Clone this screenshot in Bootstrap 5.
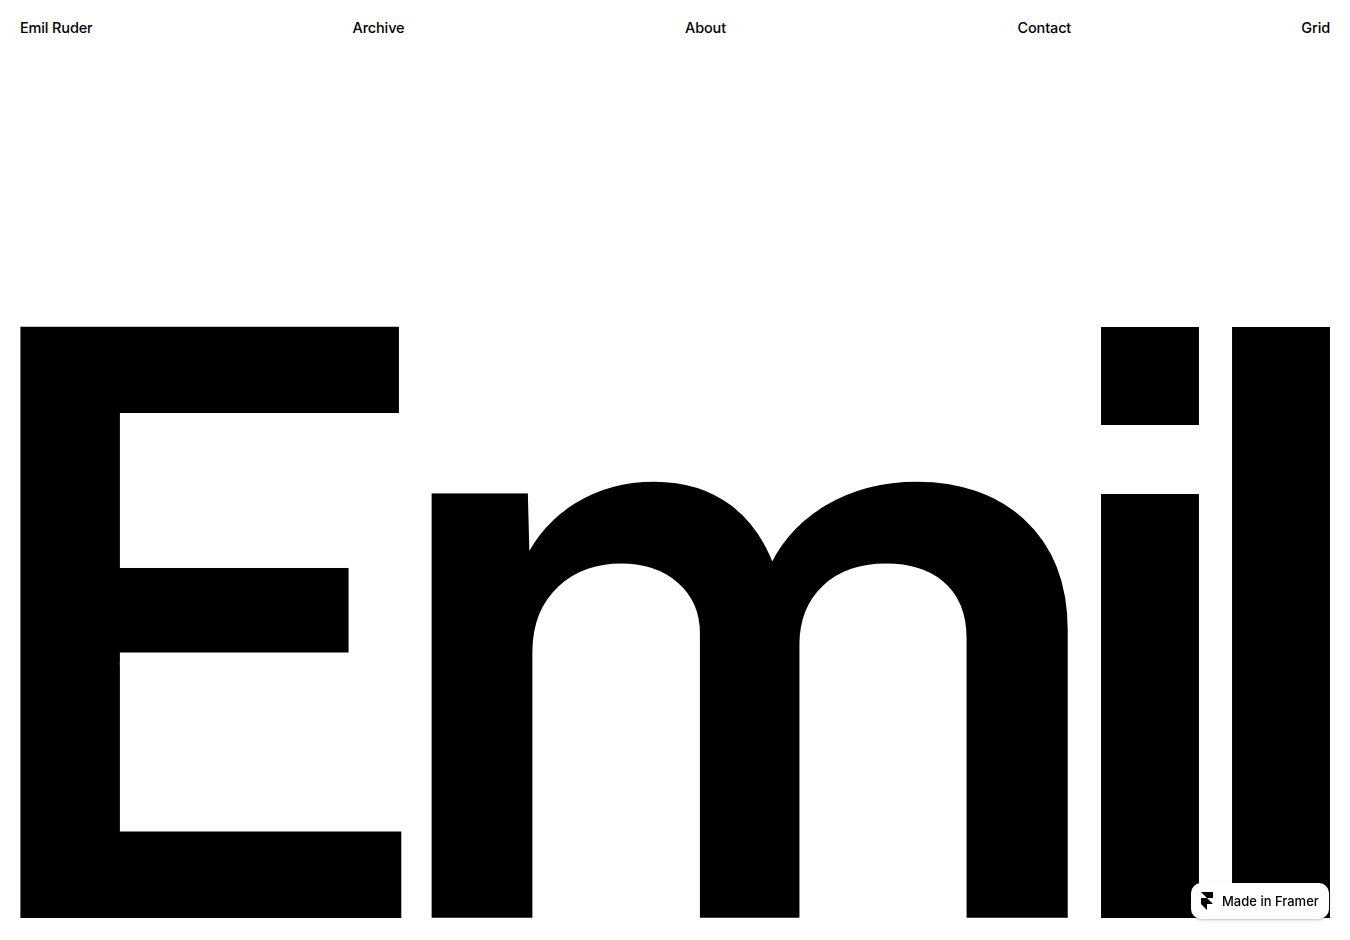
<!DOCTYPE html>
<html lang="en"><head><meta charset="utf-8"><title>Emil Ruder</title>
<link href="https://cdn.jsdelivr.net/npm/bootstrap@5.3.0/dist/css/bootstrap.min.css" rel="stylesheet">
<style>
html,body{height:100%}
body{background:#fff;color:#000;font-family:Inter,"Liberation Sans",sans-serif;overflow:hidden}
.page-wrap{height:940px;padding:20px 20px 22px}
.top-nav{display:grid;grid-template-columns:repeat(4,1fr);gap:20px}
.top-link{font-size:14.5px;font-weight:500;line-height:16px;color:#000;text-decoration:none;letter-spacing:-.01em}
.hero-word{height:591px;gap:33px;font-size:813px;line-height:591px;color:#000}
.hero-letter{display:block;position:relative;height:591px;flex:none;transform-origin:0 100%}
.hero-e,.hero-m{font-weight:500;-webkit-text-stroke:10px #000}
.hero-e{width:380px;transform:translate(-59.5px,-5px) scaleX(.99) scaleY(.983)}
.hero-e::before{content:"";position:absolute;left:150px;top:240px;width:243px;height:99px;background:linear-gradient(#000,#000) 0 0/100% 85.5px no-repeat,linear-gradient(#fff,#fff) 11px 85.5px/100% 14px no-repeat}
.hero-e::after{content:"";position:absolute;left:392px;top:232px;width:80px;height:112px;background:#fff}
.hero-m{width:637px;transform:translate(-57px,-5px) scaleX(1.035) scaleY(.945)}
.hero-m::after{content:"";position:absolute;left:47px;top:127px;width:102px;height:20px;background:#fff}
.hero-i,.hero-l{width:97.5px;font-family:"DejaVu Sans",sans-serif;font-size:778px;font-weight:700;line-height:643px;transform:translateX(-49px) scaleX(.72)}
.hero-i::after{content:"";position:absolute;left:43px;top:98px;width:182px;height:69px;background:#fff}
.framer-pill{position:fixed;left:1191px;top:883px;width:138px;height:36px;border-radius:10px;background:#fff;box-shadow:0 1px 2px rgba(0,0,0,.2),0 2px 8px rgba(0,0,0,.06);font-size:13px;font-weight:500;color:#000;text-decoration:none;gap:9px;padding-left:10px}
.pill-label{padding-top:2px}
</style></head><body>
<div class="page-wrap d-flex flex-column justify-content-between">
<nav class="top-nav"><a class="top-link" href="#">Emil Ruder</a><a class="top-link" href="#">Archive</a><a class="top-link" href="#">About</a><div class="d-flex justify-content-between"><a class="top-link" href="#">Contact</a><a class="top-link" href="#">Grid</a></div></nav>
<h1 class="hero-word d-flex m-0"><span class="hero-letter hero-e">E</span><span class="hero-letter hero-m">m</span><span class="hero-letter hero-i">i</span><span class="hero-letter hero-l">l</span></h1>
</div>
<a class="framer-pill d-flex align-items-center" href="#"><svg width="12" height="18" viewBox="0 0 12 18"><path d="M0 0h12v6H6zM0 6h6l6 6H6v6l-6-6z" fill="#000"/></svg><span class="pill-label">Made in Framer</span></a>
<script src="https://cdn.jsdelivr.net/npm/bootstrap@5.3.0/dist/js/bootstrap.bundle.min.js"></script>
</body></html>
